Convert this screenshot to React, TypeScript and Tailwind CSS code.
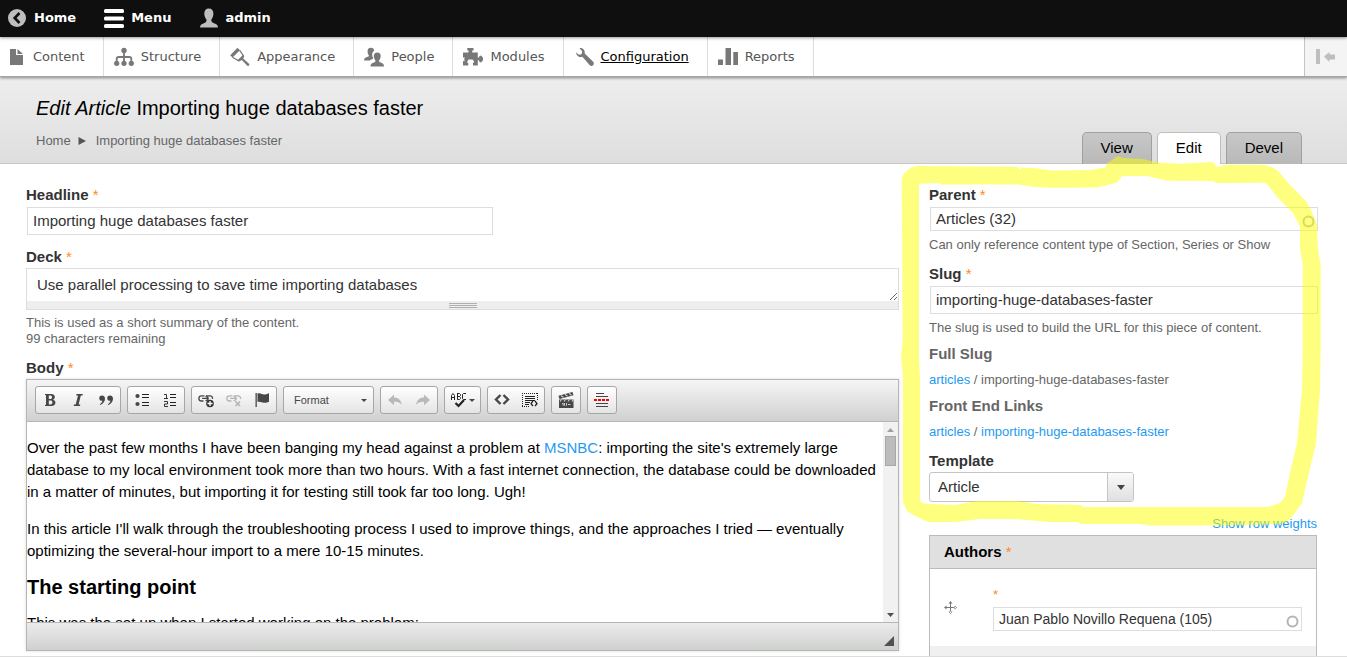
import React from "react";

function Star() {
  return <span className="font-normal text-[#ff8a1f]" aria-hidden="true"> *</span>;
}

function FieldLabel({ id, text, required = true }: { id: string; text: string; required?: boolean }) {
  return (
    <label htmlFor={id} className="mb-px block text-[15px] leading-5 font-bold text-[#333]">
      {text}
      {required && <Star />}
    </label>
  );
}

function Help({ children }: { children: React.ReactNode }) {
  return <div className="pt-[5px] text-[13px] leading-4 text-[#666]">{children}</div>;
}

/* ---------- admin menu ---------- */

const trayItems = [
  {
    name: "Content",
    icon: <path d="M4 2h6v6h7v10H4z M11.500 2l5.500 5h-5.500z" />,
  },
  {
    name: "Structure",
    icon: (
      <>
        <circle cx="10" cy="3.500" r="2.700" />
        <circle cx="2.700" cy="16.300" r="2.600" />
        <circle cx="10" cy="16.300" r="2.600" />
        <circle cx="17.300" cy="16.300" r="2.600" />
        <path d="M10 4v12M2.700 16v-4q0-2 2-2h10.600q2 0 2 2v4" fill="none" stroke="#787878" strokeWidth="1.800" />
      </>
    ),
  },
  {
    name: "Appearance",
    icon: (
      <>
        <path d="M7.500 0.800l2.400 2.400-7.400 7.200-2.300-2.200z" />
        <path d="M9.500 3.200l3.900 5.500-4.900 5-6-3.500" fill="none" stroke="#787878" strokeWidth="1.200" />
        <path d="M12.700 8.200l-5 5 1.500 1.200 2.600-1.300 5.500 5.700q1 .6 1.800-.2.700-1-.1-1.900l-5.800-5.300 1.100-2.200z" />
      </>
    ),
  },
  {
    name: "People",
    icon: (
      <>
        <path d="M6.900 0.800c2.200 0 3.100 1.200 3.200 2.900-1.600 1-2.200 2.700-1.800 5 .1.900.5 1.700.9 2.400-.2.900-.8 1.200-1.900 1.500-.6.200-1 .5-1.400.9H0c.2-2 1-2.900 3-3.400 1.400-.4 2-.8 1.900-1.600C3.900 7.500 3.500 5.700 3.600 4c.1-2 1.200-3.200 3.300-3.200z" />
        <path d="M13.300 5.500c2.300 0 3.400 1.400 3.400 3.400 0 1.500-.6 3.200-1.600 4.300-.2 1.500.4 2 2 2.500 2 .6 2.800 1.400 2.900 3.900H6.500c.1-2.500.9-3.300 2.900-3.900 1.600-.5 2.200-1 2-2.500-1-1.100-1.600-2.800-1.600-4.300 0-2 1.200-3.400 3.500-3.400z" />
      </>
    ),
  },
  {
    name: "Modules",
    icon: (
      <path d="M0 5.500h5.500V3.500H4.300V1h6.200v2.500H9.200v2h5.600v5h1.400V9.300l1.800-.8 2 2.200v2.600L18 15.500l-1.800-.8v-1.400h-1.400v5.200H10v-2.300l1.200-1.400-1.600-2.400H5.600L4 15l1.300 1.300v2.200H0v-4.800l1.400.9V10L0 10.800z" />
    ),
  },
  {
    name: "Configuration",
    icon: (
      <path d="M5.500 1.200C8.500.6 11.300 3 10.700 6.500l8.500 8.300c1.400 1.800.100 4.200-1.700 4.200-.7 0-1.300-.3-1.700-.7L8.300 9.800C5.300 11 2.200 8.800 2 5.200l2.800 2.600 2.700-.6.800-2.800z" />
    ),
  },
  {
    name: "Reports",
    icon: <path d="M0 12.500h5V18H0zM7.500 1H13v17H7.500zM15.300 5H20v13h-4.700z" />,
  },
];

function TopBar() {
  return (
    <nav className="relative z-20 flex h-[37px] items-center bg-[#0f0f0f] pb-px pl-2 font-['DejaVu_Sans',sans-serif] text-[13px] font-bold text-white shadow-[0_1px_3px_rgba(0,0,0,0.4)]">
      <a href="#home" className="mr-7 flex items-center gap-2">
        <svg width="18" height="18" viewBox="0 0 18 18">
          <circle cx="9" cy="9" r="9" fill="#bebebe" />
          <path d="M11.500 4L6.700 9l4.800 5" fill="none" stroke="#0f0f0f" strokeWidth="2.600" />
        </svg>
        Home
      </a>
      <a href="#menu" className="mr-7 flex items-center gap-[7px]">
        <svg width="20" height="20" viewBox="0 0 20 20" fill="#fff">
          <rect y="1" width="20" height="4" rx="1.500" />
          <rect y="8.500" width="20" height="4" rx="1.500" />
          <rect y="16" width="20" height="4" rx="1.500" />
        </svg>
        Menu
      </a>
      <a href="#admin" className="flex items-center gap-1.5">
        <svg width="20" height="20" viewBox="0 0 20 20" fill="#bebebe">
          <path d="M9.800 0.500c3 0 4.600 2 4.600 5 0 2.200-.8 4.500-2 6-.4 2 .4 3 2.600 3.700 2.700.8 3.900 1.700 4 4.300H1c.1-2.600 1.300-3.500 4-4.300 2.200-.7 2.800-1.700 2.400-3.700-1.200-1.500-2.100-3.800-2.100-6 0-3 1.500-5 4.500-5z" />
        </svg>
        admin
      </a>
    </nav>
  );
}

function Tray() {
  return (
    <nav className="relative z-10 flex h-10 border-b border-[#a6a6a6] bg-white font-['DejaVu_Sans',sans-serif] text-[13px] text-[#565656] shadow-[0_1px_3px_rgba(0,0,0,0.45)]">
      {trayItems.map((item, i) => (
        <a
          key={item.name}
          href={"#" + item.name.toLowerCase()}
          className={
            "flex items-center gap-[7px] border-r border-[#ddd] pr-[18px] " +
            (i === 0 ? "pl-1.5 " : "pl-2.5 ") +
            (item.name === "Configuration" ? "text-black underline" : "")
          }
        >
          <svg width="20" height="20" viewBox="0 0 20 20" fill="#787878">
            {item.icon}
          </svg>
          {item.name}
        </a>
      ))}
      <button
        type="button"
        aria-label="Vertical orientation"
        className="ml-auto flex w-[43px] items-center justify-center border-l border-[#c4c4c4] bg-[#f4f4f4]"
      >
        <svg width="20" height="16" viewBox="0 0 20 16" fill="#bebebe">
          <path d="M0 0h4v15H0zM8 7.500L13.500 3v2.500H19v5h-5.500V13z" />
        </svg>
      </button>
    </nav>
  );
}

function PageHeader() {
  const tab = "h-8 rounded-t-[5px] border border-b-0 px-[18px] text-[15px] leading-[30px] text-black";
  return (
    <header className="flex items-end justify-between border-b border-[#c8c8c8] bg-linear-to-b from-[#eee] to-[#dedede] pt-[17px] pr-[45px] pl-9">
      <div className="pb-[14px]">
        <h1 className="text-[20px] leading-7 text-black">
          <em>Edit Article</em> Importing huge databases faster
        </h1>
        <nav className="mt-[11px] flex items-center text-[13px] leading-4 text-[#666]">
          <a href="#home">Home</a>
          <svg className="mr-2.5 ml-[7px]" width="8" height="8" viewBox="0 0 8 8" fill="#555">
            <path d="M0.500 0L8 4 0.500 8z" />
          </svg>
          <a href="#node">Importing huge databases faster</a>
        </nav>
      </div>
      <nav className="-mb-px flex gap-[5px]">
        <a href="#view" className={tab + " border-[#a0a0a0] bg-linear-to-b from-[#c8c8c8] to-[#b8b8b8]"}>View</a>
        <a href="#edit" className={tab + " border-[#c0c0b8] bg-white"}>Edit</a>
        <a href="#devel" className={tab + " border-[#a0a0a0] bg-linear-to-b from-[#c8c8c8] to-[#b8b8b8]"}>Devel</a>
      </nav>
    </header>
  );
}

/* ---------- rich text editor ---------- */

function Tool({ label, children }: { label: string; children: React.ReactNode }) {
  return (
    <button type="button" aria-label={label} className="flex w-7 items-center justify-center">
      <svg width="16" height="16" viewBox="0 0 16 16" fill="#474747">
        {children}
      </svg>
    </button>
  );
}

function Group({ children }: { children: React.ReactNode }) {
  return (
    <div className="flex h-7 rounded-[3px] border border-[#a6a6a6] bg-linear-to-b from-white to-[#e4e4e4]">
      {children}
    </div>
  );
}

const chain = (
  <>
    <path d="M6.500 3.800H3.500a2.400 2.400 0 0 0 0 5.200h2M8 3.800h4a2.500 2.500 0 0 1 2.500 3" fill="none" stroke="currentColor" strokeWidth="1.300" />
    <path d="M4 6.400h6M7.500 4.300q2.700.2 2.700 2.100T7.500 8.700" fill="none" stroke="currentColor" strokeWidth="1.300" />
  </>
);

function Toolbar() {
  return (
    <div className="flex flex-wrap gap-1.5 border-b border-[#b6b6b6] bg-linear-to-b from-[#f5f5f5] to-[#cfd1cf] px-2 pt-1.5 pb-[7px]">
      <Group>
        <Tool label="Bold">
          <path fillRule="evenodd" d="M3 2h6c2.500 0 3.800 1.200 3.800 3.100 0 1.300-.7 2.200-1.800 2.600 1.500.4 2.400 1.400 2.400 2.900C13.400 12.800 12 14 9.300 14H3v-1l1-.3V3.300L3 3zM6.800 3.600v3.500h1.400c1.200 0 1.800-.6 1.800-1.800 0-1.200-.6-1.700-1.800-1.700zM6.800 8.500v3.900h1.600c1.400 0 2-.7 2-2 0-1.300-.7-1.900-2-1.900z" />
        </Tool>
        <Tool label="Italic">
          <path d="M6.500 2h6.300l-.3 1.500h-1.700L8.600 12.500h1.700L10 14H3.700l.3-1.500h1.700L8 3.500H6.200z" />
        </Tool>
        <Tool label="Block Quote">
          <path d="M4 3.500c2 0 3 1.300 3 3.200C7 9.500 5 12 2.200 13l-.4-.8C3.400 11.300 4.300 10 4.400 8.800 2.600 9 1.200 7.900 1.200 6.200 1.200 4.600 2.300 3.500 4 3.500zM12 3.500c2 0 3 1.300 3 3.200 0 2.800-2 5.300-4.800 6.300l-.4-.8c1.600-.9 2.500-2.200 2.600-3.400-1.800.2-3.200-.9-3.200-2.600 0-1.600 1.100-2.700 2.800-2.700z" />
        </Tool>
      </Group>
      <Group>
        <Tool label="Bulleted List">
          <circle cx="3.500" cy="4" r="2.100" />
          <circle cx="3.500" cy="12" r="2.100" />
          <path d="M8 2h7v1H8zM8 5h7v1H8zM8 10h7v1H8zM8 13h7v1H8z" fill="#222" />
        </Tool>
        <Tool label="Numbered List">
          <path d="M8 2h6v1H8zM8 5h6v1H8zM8 10h6v1H8zM8 13h6v1H8z" fill="#222" />
          <path d="M2 2.500h2.500v4M2 6.500h4M2 9.500h3.500v2.500h-3v2.500h3.500" fill="none" stroke="#333" />
        </Tool>
      </Group>
      <Group>
        <Tool label="Link">
          <g color="#474747">{chain}</g>
          <circle cx="12" cy="11.500" r="3.800" fill="#333" />
          <path d="M12 9v5M9.500 11.500h5" stroke="#fff" strokeWidth="1.300" />
        </Tool>
        <Tool label="Unlink">
          <g color="#b4b4b4">{chain}</g>
          <path d="M9.500 9.500l4.500 4.500M14 9.500L9.500 14" stroke="#b4b4b4" strokeWidth="1.700" />
        </Tool>
        <Tool label="Anchor">
          <path d="M1.500 1h1.300v14H1.500z" />
          <path d="M3.500 1.500c3-1 4.500 1 6.500 1 1.500 0 3-.5 5-1.300v8.500c-2 .9-3.500 1.100-5 1.100-2.500 0-3.500-1.600-6.500-.8z" />
        </Tool>
      </Group>
      <Group>
        <button type="button" className="flex w-[89px] items-center justify-between pr-1.5 pl-2.5 text-[11px] text-[#474747]">
          Format
          <svg width="6" height="3" viewBox="0 0 6 3" fill="#474747"><path d="M0 0h6L3 3z" /></svg>
        </button>
      </Group>
      <Group>
        <Tool label="Undo">
          <path d="M1 8l6-5.500v3c4.500 0 7 2.500 8 7.500-2-2.600-4.500-3.400-8-3.200v3.400z" fill="#b9b9b9" />
        </Tool>
        <Tool label="Redo">
          <path d="M15 8L9 2.500v3c-4.500 0-7 2.500-8 7.500 2-2.600 4.500-3.400 8-3.200v3.400z" fill="#b9b9b9" />
        </Tool>
      </Group>
      <Group>
        <button type="button" aria-label="Spell Check" className="flex w-[35px] items-center justify-center gap-px">
          <svg width="18" height="16" viewBox="0 0 18 16" fill="none" stroke="#222">
            <path d="M1.500 8V3.500L3 1.500 4.500 3.500V8M1.500 5.500h3M7.500 1.500v6h2l1-1V5.500l-1-1h-2 2l1-1v-1l-1-1h-2.500M16 1.500h-2.500l-1 1v4l1 1H16" />
            <path d="M5.500 11l3 3 5.500-6" strokeWidth="2.200" />
          </svg>
          <svg width="6" height="3" viewBox="0 0 6 3" fill="#474747"><path d="M0 0h6L3 3z" /></svg>
        </button>
      </Group>
      <Group>
        <Tool label="Source">
          <path d="M6.500 3L2 7.500 6.500 12M9.500 3L14 7.500 9.500 12" fill="none" stroke="#474747" strokeWidth="2.400" />
        </Tool>
        <Tool label="Show Blocks">
          <path d="M0 1.500h16M0 14.500h8M0.500 1v14M15.500 1v8" fill="none" stroke="#222" strokeDasharray="1 1" />
          <path d="M3 4h10v1H3zM3 6h10v1H3zM3 8h10v1H3zM3 10h5v1H3zM3 12h4v1H3z" fill="#222" />
          <path d="M11 9l-2 2.700L11 14M13 9l2 2.700L13 14" fill="none" stroke="#222" strokeWidth="1.300" />
        </Tool>
      </Group>
      <Group>
        <Tool label="Media">
          <path d="M0.500 3.800L14.500 0l1 3.200L1.500 7zM1 7.500h14.500V16H1z" />
          <path d="M3 3.500l2.500 2M7 2.300l2.500 2M11 1.300l2.500 2M3.500 7.500l-1.500 2M7.500 7.500l-1.500 2M11.500 7.500l-1.500 2M15 7.500l-1 2" stroke="#ccc" strokeWidth="1.100" />
          <path d="M4 11.500h1.200v2.200M6.500 11v2.700M8.500 11v2.700M10 12.500h2.500" stroke="#ccc" fill="none" />
        </Tool>
      </Group>
      <Group>
        <Tool label="Teaser Break">
          <path d="M2 1h8v1H2zM2 4h12v1H2zM2 11h12v1H2zM2 14h12v1H2z" fill="#444" />
          <path d="M0 8h16" stroke="#f00" strokeWidth="2" strokeDasharray="3 1" />
        </Tool>
      </Group>
    </div>
  );
}

function Editor() {
  return (
    <div id="body" className="border border-[#b6b6b6] shadow-[0_0_3px_rgba(0,0,0,0.15)]">
      <Toolbar />
      <div className="flex h-[200px] bg-white">
        <div className="flex flex-1 flex-col gap-[15px] overflow-hidden pt-[15px] text-[15px] leading-[22px] text-black">
          <p>
            Over the past few months I have been banging my head against a problem at{" "}
            <a href="#msnbc" className="text-[#1e9bf0]">MSNBC</a>: importing the site's extremely large database to my
            local environment took more than two hours. With a fast internet connection, the database could be
            downloaded in a matter of minutes, but importing it for testing still took far too long. Ugh!
          </p>
          <p>
            In this article I'll walk through the troubleshooting process I used to improve things, and the approaches I
            tried — eventually optimizing the several-hour import to a mere 10-15 minutes.
          </p>
          <h2 className="text-[20px] leading-5 font-bold">The starting point</h2>
          <p>This was the set up when I started working on the problem:</p>
        </div>
        <div className="flex w-[15px] flex-col items-center bg-[#f1f1f1] pt-1.5 pb-[5px]">
          <svg width="7" height="4" viewBox="0 0 7 4" fill="#a0a0a0"><path d="M0 4h7L3.500 0z" /></svg>
          <div className="mt-1 h-[30px] w-[11px] border border-[#a8a8a8] bg-[#bcbcbc]" />
          <svg className="mt-auto" width="7" height="4" viewBox="0 0 7 4" fill="#505050"><path d="M0 0h7L3.500 4z" /></svg>
        </div>
      </div>
      <div className="flex h-7 items-end justify-end border-t border-[#b6b6b6] bg-linear-to-b from-[#ebebeb] to-[#cfd1cf] pr-1 pb-1">
        <svg width="10" height="10" viewBox="0 0 10 10" fill="#505050"><path d="M10 0v10H0z" /></svg>
      </div>
    </div>
  );
}

/* ---------- sidebar ---------- */

function Throbber() {
  return (
    <svg className="shrink-0" width="13" height="13" viewBox="0 0 13 13" fill="none" stroke="#b4b4b4" strokeWidth="2">
      <circle cx="6.500" cy="6.500" r="5" />
    </svg>
  );
}

function Highlight() {
  return (
    <svg className="pointer-events-none absolute -top-[35px] -left-[39px] z-30" width="440" height="380" viewBox="0 0 440 380" aria-hidden="true">
      <path
        fill="#ff0"
        fillOpacity="0.5"
        fillRule="evenodd"
        d="M11.700 28Q16 18 27 16L128 16.700 130 20 132 17.500 143 18 162 20.500 200 20 216 17.500V14L228 6 233 8 253 9 267 12.500 290 13.700 322.700 12 327 17 337 14.700H370Q380 15 388 20.700L400 35 416.700 51.700 421 60 427 75 428 100 430.700 115V200L430 240 426 293 418 327 412 353 402 367Q396 373 390 374L333 375.500H260L250 374H190L188 372H158L127 369H90L67 372H38L25 366 17 361 13 352V227L11 207 12.700 190ZM29 34V210L30 227V351Q33 354 39 354L65 355 87 351H127L147 354 191 355 193 357H378L390 353 395 347 400 323 407 293 412 240 412.700 200V115L410 98V77L403 63 388 48 377 34 373 32.700 327 33 322 31 277 30.700 257 26H232L227 32.700 207 37.500 163 37.700 145 37 128 34.500H52L48 33Z"
      />
    </svg>
  );
}

function Sidebar() {
  const link = "text-[#1e9bf0]";
  const heading = "mt-2 text-[15px] leading-5 font-bold text-[#666]";
  const path = "mt-2 text-[13px] leading-4 text-[#666]";
  return (
    <aside className="relative">
      <FieldLabel id="parent" text="Parent" />
      <div className="mx-px mt-0.5 mb-px flex h-6 w-full items-center border border-[#ddd] bg-white pr-0.5 pl-[5px]">
        <input id="parent" defaultValue="Articles (32)" className="min-w-0 flex-1 bg-transparent text-[15px] leading-5 text-[#333] outline-none" />
        <span className="mt-1"><Throbber /></span>
      </div>
      <Help>Can only reference content type of Section, Series or Show</Help>

      <div className="mt-[11px]">
        <FieldLabel id="slug" text="Slug" />
        <input id="slug" defaultValue="importing-huge-databases-faster" className="mx-px mt-0.5 mb-px block h-7 w-full border border-[#ddd] bg-white px-[5px] pb-px text-[15px] text-[#333] outline-none" />
        <Help>The slug is used to build the URL for this piece of content.</Help>
      </div>

      <h4 className={heading}>Full Slug</h4>
      <div className={path}>
        <a href="#articles" className={link}>articles</a> / importing-huge-databases-faster
      </div>
      <h4 className={heading}>Front End Links</h4>
      <div className={path}>
        <a href="#articles" className={link}>articles</a> / <a href="#article" className={link}>importing-huge-databases-faster</a>
      </div>

      <div className="mt-[11px]">
        <FieldLabel id="template" text="Template" required={false} />
        <div className="grid h-[30px] w-[205px] grid-cols-[1fr_26px] overflow-hidden rounded-[3px] border border-[#c4c4c4] bg-white">
          <select id="template" className="col-span-2 col-start-1 row-start-1 appearance-none bg-transparent pl-2 text-[15px] text-[#333] outline-none">
            <option>Article</option>
          </select>
          <span className="pointer-events-none col-start-2 row-start-1 flex items-center justify-center border-l border-[#c4c4c4] bg-linear-to-b from-[#fafafa] to-[#e0e0e0]">
            <svg width="8" height="5" viewBox="0 0 8 5" fill="#444"><path d="M0 0h8L4 5z" /></svg>
          </span>
        </div>
      </div>

      <div className="mt-3.5 text-right text-[13px] leading-4">
        <a href="#weights" className={link}>Show row weights</a>
      </div>
      <table className="mt-[3px] w-full border-separate border-spacing-0 border border-[#bbb]">
        <thead>
          <tr>
            <th colSpan={2} className="h-[33px] border-b border-[#bbb] bg-[#e0e0e0] pl-[14px] text-left text-[15px] leading-5 font-bold text-black">
              Authors<Star />
            </th>
          </tr>
        </thead>
        <tbody>
          <tr>
            <td className="w-[63px] pl-[14px] align-middle">
              <svg width="13" height="13" viewBox="0 0 13 13" fill="#777">
                <path d="M6 1h1v11H6zM1 6h11v1H1zM6.500 0L8.500 2.500H4.500zM6.500 13L8.500 10.500H4.500zM0 6.500L2.500 4.500v4zM13 6.500L10.500 4.500v4z" />
              </svg>
            </td>
            <td className="pt-3.5 pr-3.5 pb-[15px] align-middle">
              <label htmlFor="author" className="block h-6 text-[13px] leading-6 text-[#ff8a1f]">*</label>
              <div className="flex h-6 items-center border border-[#ddd] bg-white pr-0.5 pl-[5px]">
                <input id="author" defaultValue="Juan Pablo Novillo Requena (105)" className="min-w-0 flex-1 bg-transparent text-[14px] leading-5 text-[#333] outline-none" />
                <span className="mt-1"><Throbber /></span>
              </div>
            </td>
          </tr>
          <tr>
            <td colSpan={2} className="h-[76px] bg-[#f0f0f0]" />
          </tr>
        </tbody>
      </table>
      <Highlight />
    </aside>
  );
}

export default function App() {
  return (
    <div className="h-screen overflow-hidden border-b border-[#ddd] bg-white font-['Liberation_Sans',Arial,sans-serif]">
      <TopBar />
      <Tray />
      <PageHeader />
      <main className="grid grid-cols-[9fr_4fr] gap-[30px] pt-[21px] pr-[30px] pl-[26px]">
        <div>
          <FieldLabel id="headline" text="Headline" />
          <input id="headline" defaultValue="Importing huge databases faster" className="mx-px mt-0.5 mb-px block h-7 w-[466px] border border-[#ddd] bg-white px-[5px] pb-px text-[15px] text-[#333] outline-none" />

          <div className="mt-3">
            <FieldLabel id="deck" text="Deck" />
            <div className="border border-[#ddd] bg-[#eee]">
              <textarea id="deck" rows={1} defaultValue="Use parallel processing to save time importing databases" className="block h-8 w-full resize-y overflow-hidden bg-white px-2.5 py-1.5 text-[15px] leading-5 text-[#333] outline-none" />
              <div className="flex h-2 items-center justify-center">
                <svg width="28" height="5" viewBox="0 0 28 5" stroke="#b0b0b0">
                  <path d="M0 0.500h28M0 2.500h28M0 4.500h28" />
                </svg>
              </div>
            </div>
            <Help>
              This is used as a short summary of the content.
              <br />
              99 characters remaining
            </Help>
          </div>

          <div className="mt-[11px]">
            <FieldLabel id="body" text="Body" />
            <Editor />
            <a href="#plain" className="mt-0.5 block text-[13px] leading-4 text-[#1e9bf0]">Switch to plain text editor</a>
          </div>
        </div>
        <Sidebar />
      </main>
    </div>
  );
}
